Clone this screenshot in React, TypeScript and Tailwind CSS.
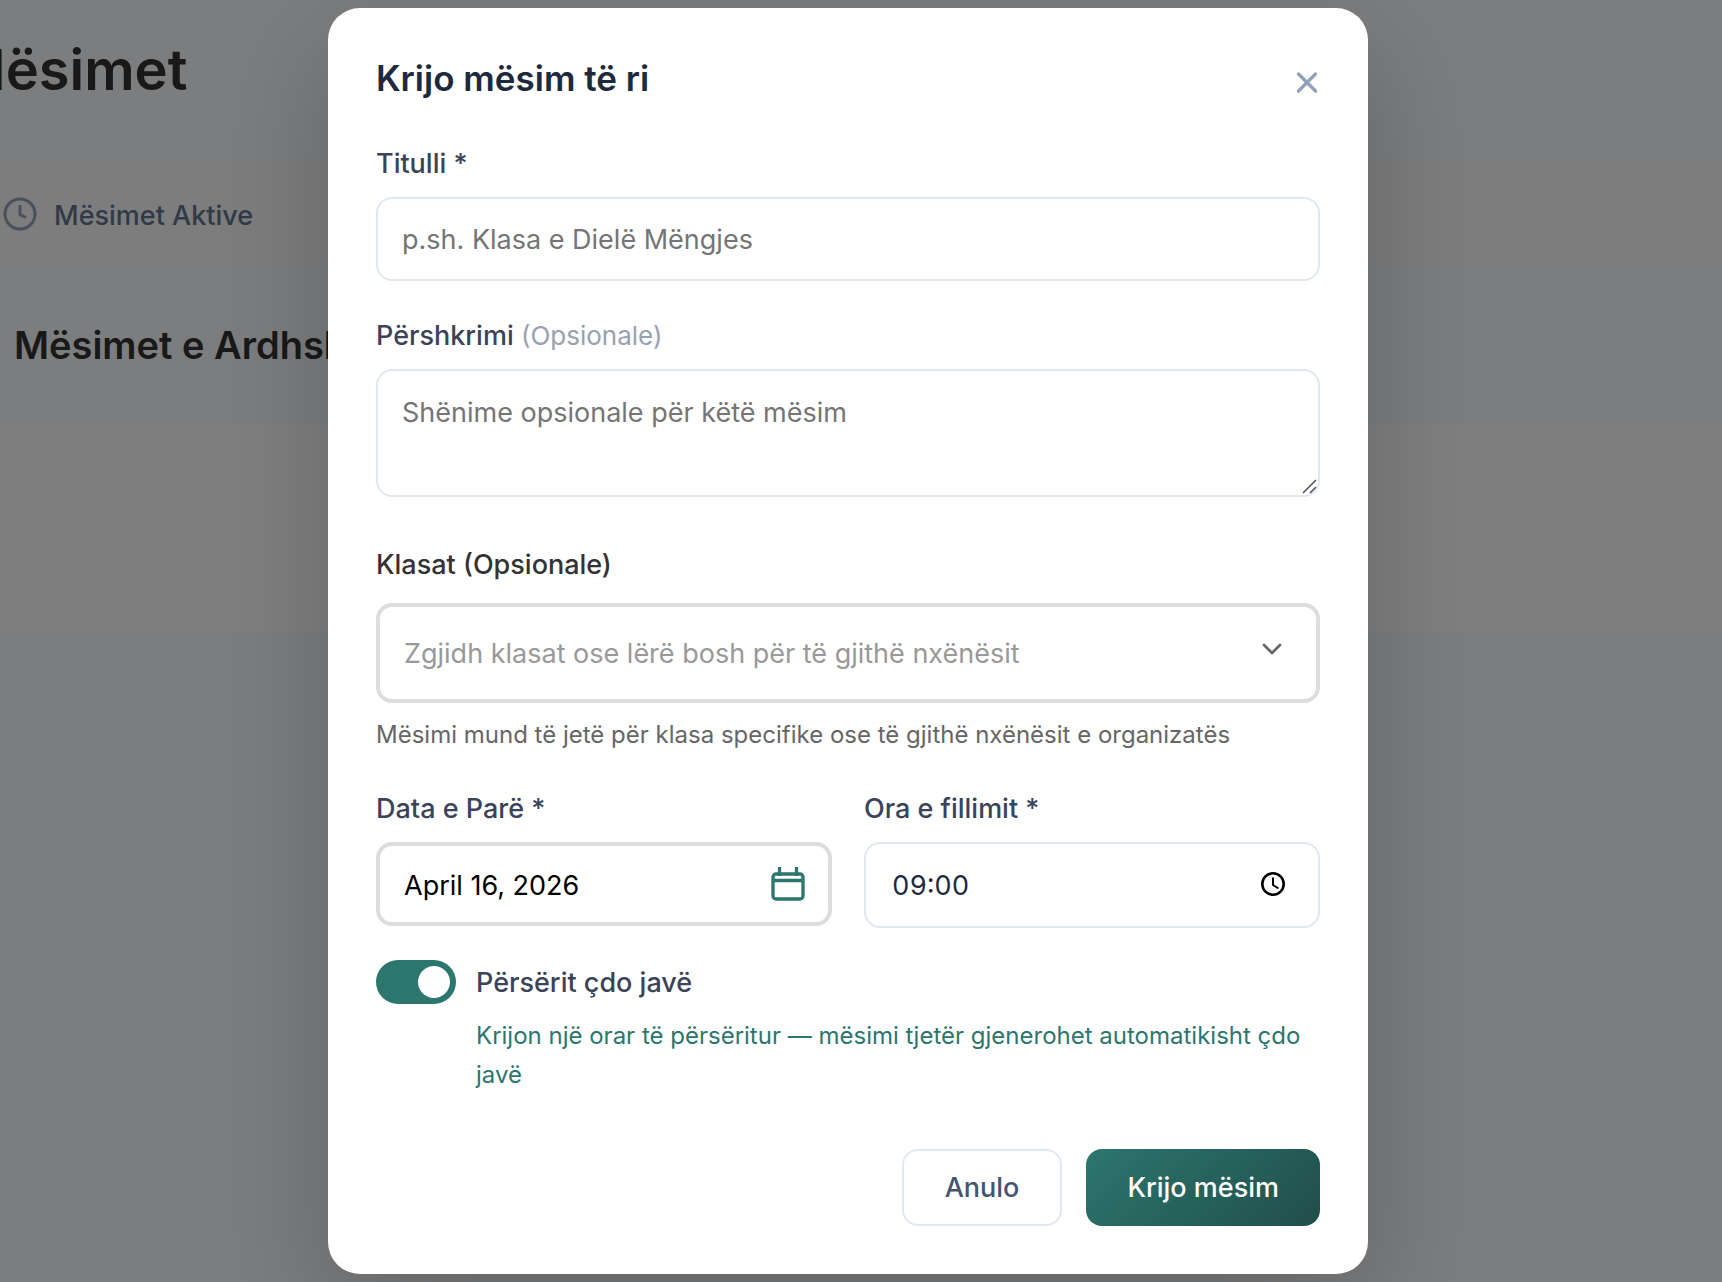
import { useState } from "react";
import type { ReactNode } from "react";

const fieldClass = "block w-full rounded-2xl bg-white px-6 text-[27px] outline-none placeholder:text-[#757575]";

export default function App() {
    return (
        <div className="grid min-h-screen overflow-hidden bg-[#f8fafc] font-['Inter',sans-serif]">
            <div className="col-start-1 row-start-1 min-w-0">
                <LessonsPage />
            </div>

            {/* Dimmed backdrop with the dialog on top */}
            <div className="z-10 col-start-1 row-start-1 flex items-start justify-center bg-black/50 py-2 pr-[26px]">
                <CreateLessonDialog />
            </div>
        </div>
    );
}

function LessonsPage() {
    return (
        <div className="flex flex-col">
            <header className="flex h-[163px] items-start pt-8">
                <h1 className="-ml-[46px] text-[56px] leading-[76px] font-semibold text-[#333333]">Mësimet</h1>
            </header>
            <nav className="flex h-[102px] items-center bg-[#fafbfc]">
                <a href="#aktive" className="flex items-center gap-3.5 text-[27px] font-medium text-slate-500">
                    <ClockIcon className="size-10 text-slate-400" />
                    <span className="pt-1">Mësimet Aktive</span>
                </a>
            </nav>
            <div className="flex h-[159px] items-center px-3.5 pt-0.5">
                <h2 className="text-[38px] font-semibold text-[#333333]">Mësimet e Ardhshme</h2>
            </div>
            <section className="h-[208px] bg-white" />
        </div>
    );
}

function CreateLessonDialog() {
    const [weekly, setWeekly] = useState(true);

    return (
        <form
            role="dialog"
            aria-labelledby="dialog-title"
            onSubmit={(e) => e.preventDefault()}
            className="w-[1040px] max-w-full rounded-[32px] bg-white p-12 shadow-[0_40px_120px_rgba(0,0,0,0.2)]"
        >
            <div className="flex items-start justify-between">
                <h2 id="dialog-title" className="text-[35px] leading-[44px] font-semibold text-slate-800">
                    Krijo mësim të ri
                </h2>
                <button type="button" aria-label="Mbyll" className="mt-3 text-slate-400">
                    <CloseIcon className="h-7 w-[26px]" />
                </button>
            </div>

            <div className="mt-12 flex flex-col gap-[39px]">
                <Field id="title" label="Titulli *">
                    <input
                        id="title"
                        type="text"
                        placeholder="p.sh. Klasa e Dielë Mëngjes"
                        className={`${fieldClass} h-[84px] border-2 border-slate-200`}
                    />
                </Field>

                <Field
                    id="description"
                    label={<>Përshkrimi <span className="text-[26px] font-normal text-gray-400">(Opsionale)</span></>}
                >
                    <div className="relative">
                        <textarea
                            id="description"
                            rows={2}
                            placeholder="Shënime opsionale për këtë mësim"
                            className={`${fieldClass} resize-none border-2 border-slate-200 pt-[21px] pb-[19px] leading-[42px]`}
                        />
                        <ResizeGrip className="pointer-events-none absolute right-0.5 bottom-0.5 size-4 text-[#555555]" />
                    </div>
                </Field>
            </div>

            {/* Classes */}
            <div className="mt-[52px] flex flex-col">
                <label htmlFor="classes" className="text-[27px] leading-8 font-medium text-[#333333]">
                    Klasat (Opsionale)
                </label>
                <div className="relative mt-[22px]">
                    <select
                        id="classes"
                        defaultValue=""
                        className={`${fieldClass} h-[100px] appearance-none border-4 border-[#dddddd] pt-0.5 text-[#999999]`}
                    >
                        <option value="">Zgjidh klasat ose lërë bosh për të gjithë nxënësit</option>
                    </select>
                    <ChevronIcon className="pointer-events-none absolute top-8 right-8 size-8 text-[#666666]" />
                </div>
                <p className="mt-3.5 text-[24px] leading-9 text-[#666666]">
                    Mësimi mund të jetë për klasa specifike ose të gjithë nxënësit e organizatës
                </p>
            </div>

            {/* Date and time */}
            <div className="mt-10 grid grid-cols-2 items-start gap-8">
                <Field id="date" label="Data e Parë *">
                    <div className="relative">
                        <input
                            id="date"
                            type="text"
                            defaultValue="April 16, 2026"
                            className={`${fieldClass} h-[84px] border-4 border-[#dddddd] pt-0.5 text-black`}
                        />
                        <button type="button" aria-label="Zgjidh datën" className="absolute top-[22px] right-6 text-[#2c766e]">
                            <CalendarIcon className="size-10" />
                        </button>
                    </div>
                </Field>
                <Field id="time" label="Ora e fillimit *">
                    <div className="relative">
                        <input
                            id="time"
                            type="text"
                            defaultValue="09:00"
                            className={`${fieldClass} h-[86px] border-2 border-slate-200 pl-[26px] text-slate-800 tabular-nums`}
                        />
                        <button type="button" aria-label="Zgjidh orën" className="absolute top-[26px] right-[31px] text-black">
                            <TimeIcon className="size-8" />
                        </button>
                    </div>
                </Field>
            </div>

            {/* Weekly repeat */}
            <div className="mt-8 flex items-start gap-5">
                <input
                    id="weekly"
                    type="checkbox"
                    role="switch"
                    checked={weekly}
                    onChange={(e) => setWeekly(e.target.checked)}
                    className="flex h-11 w-20 shrink-0 appearance-none items-center rounded-full bg-slate-300 px-1.5 before:size-8 before:rounded-full before:bg-white before:content-[''] checked:justify-end checked:bg-[#2c766e]"
                />
                <div className="flex flex-col gap-2.5">
                    <label htmlFor="weekly" className="text-[27px] leading-[46px] font-medium text-[#3b4358]">
                        Përsërit çdo javë
                    </label>
                    <p className="text-[24px] leading-[39px] text-[#2c766e]">
                        Krijon një orar të përsëritur — mësimi tjetër gjenerohet automatikisht çdo javë
                    </p>
                </div>
            </div>

            <div className="mt-[55px] flex justify-end gap-6">
                <button
                    type="button"
                    className="h-[77px] rounded-2xl border-2 border-slate-200 bg-white px-[41px] pt-0.5 text-[27px] font-medium text-slate-600"
                >
                    Anulo
                </button>
                <button
                    type="submit"
                    className="h-[77px] rounded-2xl bg-[linear-gradient(135deg,#2c766e,#214e4b)] px-[41px] pt-0.5 text-[27px] font-medium text-white"
                >
                    Krijo mësim
                </button>
            </div>
        </form>
    );
}

function Field({ id, label, children }: { id: string; label: ReactNode; children: ReactNode }) {
    return (
        <div className="flex flex-col gap-[17px]">
            <label htmlFor={id} className="text-[27px] leading-8 font-medium text-[#3b4358]">{label}</label>
            {children}
        </div>
    );
}

function ClockIcon({ className }: { className?: string }) {
    return (
        <svg viewBox="0 0 40 40" className={className} fill="none" stroke="currentColor" strokeWidth="3">
            <circle cx="20" cy="20" r="15" />
            <path d="M20 11v9.500l6 3" />
        </svg>
    );
}

function CloseIcon({ className }: { className?: string }) {
    return (
        <svg viewBox="0 0 26 28" className={className} fill="none" stroke="currentColor" strokeWidth="3.300" strokeLinecap="round">
            <path d="M4.500 6l17 17M21.500 6l-17 17" />
        </svg>
    );
}

function ResizeGrip({ className }: { className?: string }) {
    return (
        <svg viewBox="0 0 16 16" className={className} fill="none" stroke="currentColor" strokeWidth="1.600">
            <path d="M1 14L14 1M8 14l6-6" />
        </svg>
    );
}

function ChevronIcon({ className }: { className?: string }) {
    return (
        <svg viewBox="0 0 32 32" className={className} fill="none" stroke="currentColor" strokeWidth="2.700" strokeLinecap="round" strokeLinejoin="round">
            <path d="M8 10l8 8 8-8" />
        </svg>
    );
}

function CalendarIcon({ className }: { className?: string }) {
    return (
        <svg viewBox="0 0 40 40" className={className} fill="none" stroke="currentColor" strokeWidth="3.300">
            <rect x="5" y="10" width="30" height="25" rx="3" />
            <path d="M5 16.500h30M11.500 3v9M28.500 3v9" />
        </svg>
    );
}

function TimeIcon({ className }: { className?: string }) {
    return (
        <svg viewBox="0 0 32 32" className={className} fill="none" stroke="currentColor" strokeWidth="2.600">
            <circle cx="16" cy="16" r="10.700" />
            <path d="M16 9.500v7.500l5.500 3.500" strokeWidth="2" />
        </svg>
    );
}
